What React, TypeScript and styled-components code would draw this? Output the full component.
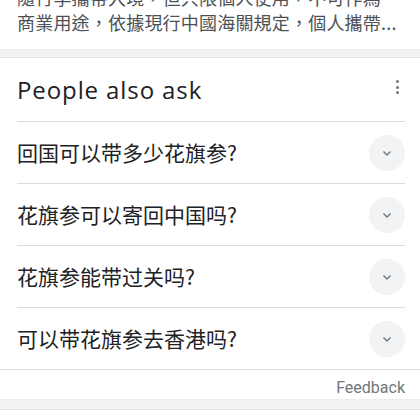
import styled, { createGlobalStyle } from 'styled-components';

const GlobalStyle = createGlobalStyle`
	html, body {
		margin: 0;
		padding: 0;
		background: #fff;
	}
	body {
		font-family: Roboto, "Noto Sans CJK TC", "Noto Sans CJK SC", sans-serif;
		overflow: hidden;
	}
`;

const Page = styled.div`
	width: 420px;
	height: 420px;
	overflow: hidden;
	display: flex;
	flex-direction: column;
`;

const SnippetCard = styled.div`
	padding: 0 17px;
	margin-top: -15px;
	height: 64px;
	flex-shrink: 0;
`;

const SnippetLine = styled.div`
	font-family: "Noto Sans CJK TC", sans-serif;
	font-size: 18px;
	letter-spacing: 0.2px;
	line-height: 25px;
	color: #4d5156;
	white-space: nowrap;
	overflow: hidden;
`;

const Gap = styled.div<{ $height: number }>`
	height: ${(p) => p.$height}px;
	flex-shrink: 0;
	background: #f1f3f4;
	border-top: 1px solid #ebedef;
	border-bottom: 1px solid #e4e6e8;
	box-sizing: border-box;
`;

const Card = styled.div`
	display: flex;
	flex-direction: column;
	background: #fff;
`;

const TitleRow = styled.div`
	display: flex;
	align-items: center;
	justify-content: space-between;
	height: 63px;
	padding: 0 17px 0 17px;
`;

const Title = styled.div`
	font-family: "Open Sans", Roboto, sans-serif;
	font-size: 24px;
	letter-spacing: 0.9px;
	color: #202124;
	margin-top: 0;
`;

const MoreButton = styled.div`
	align-self: flex-start;
	margin-top: 22px;
	display: flex;
	flex-direction: column;
	gap: 2.5px;
	padding: 0 4px;
`;

const Dot = styled.span`
	width: 3px;
	height: 3px;
	border-radius: 50%;
	background: #70757a;
`;

const Divider = styled.div<{ $full?: boolean }>`
	height: 1px;
	background: #dadce0;
	margin: ${(p) => (p.$full ? '0' : '0 15px 0 17px')};
`;

const QuestionRow = styled.div`
	display: flex;
	align-items: center;
	justify-content: space-between;
	height: 61px;
	padding: 0 15px 0 17px;
`;

const Question = styled.div`
	font-family: "Noto Sans CJK SC", sans-serif;
	font-size: 21px;
	color: #202124;
	margin-top: -2px;
`;

const ChevronButton = styled.div`
	width: 36px;
	height: 36px;
	border-radius: 50%;
	background: #f1f3f4;
	display: flex;
	align-items: center;
	justify-content: center;
`;

const FeedbackRow = styled.div`
	height: 29px;
	display: flex;
	align-items: center;
	justify-content: flex-end;
	padding: 0 15px;
`;

const FeedbackLink = styled.span`
	font-family: Roboto, sans-serif;
	font-size: 16px;
	color: #70757a;
	margin-top: 6px;
`;

const questions = [
	'回国可以带多少花旗参?',
	'花旗参可以寄回中国吗?',
	'花旗参能带过关吗?',
	'可以带花旗参去香港吗?',
];

const Chevron = () => (
	<svg width="14" height="14" viewBox="0 0 24 24">
		<path d="M6 9.5l6 6 6-6" fill="none" stroke="#70757a" strokeWidth="2.4" />
	</svg>
);

const App = () => {
	return (
		<Page>
			<GlobalStyle />
			<SnippetCard>
				<SnippetLine>隨行李攜帶入境，但只限個人使用，不可作為</SnippetLine>
				<SnippetLine>商業用途，依據現行中國海關規定，個人攜帶...</SnippetLine>
			</SnippetCard>
			<Gap $height={9} />
			<Card>
				<TitleRow>
					<Title>People also ask</Title>
					<MoreButton>
						<Dot />
						<Dot />
						<Dot />
					</MoreButton>
				</TitleRow>
				{questions.map((q) => (
					<div key={q}>
						<Divider $full={false} />
						<QuestionRow>
							<Question>{q}</Question>
							<ChevronButton>
								<Chevron />
							</ChevronButton>
						</QuestionRow>
					</div>
				))}
				<Divider $full />
				<FeedbackRow>
					<FeedbackLink>Feedback</FeedbackLink>
				</FeedbackRow>
			</Card>
			<Gap $height={11} />
		</Page>
	);
};

export default App;
